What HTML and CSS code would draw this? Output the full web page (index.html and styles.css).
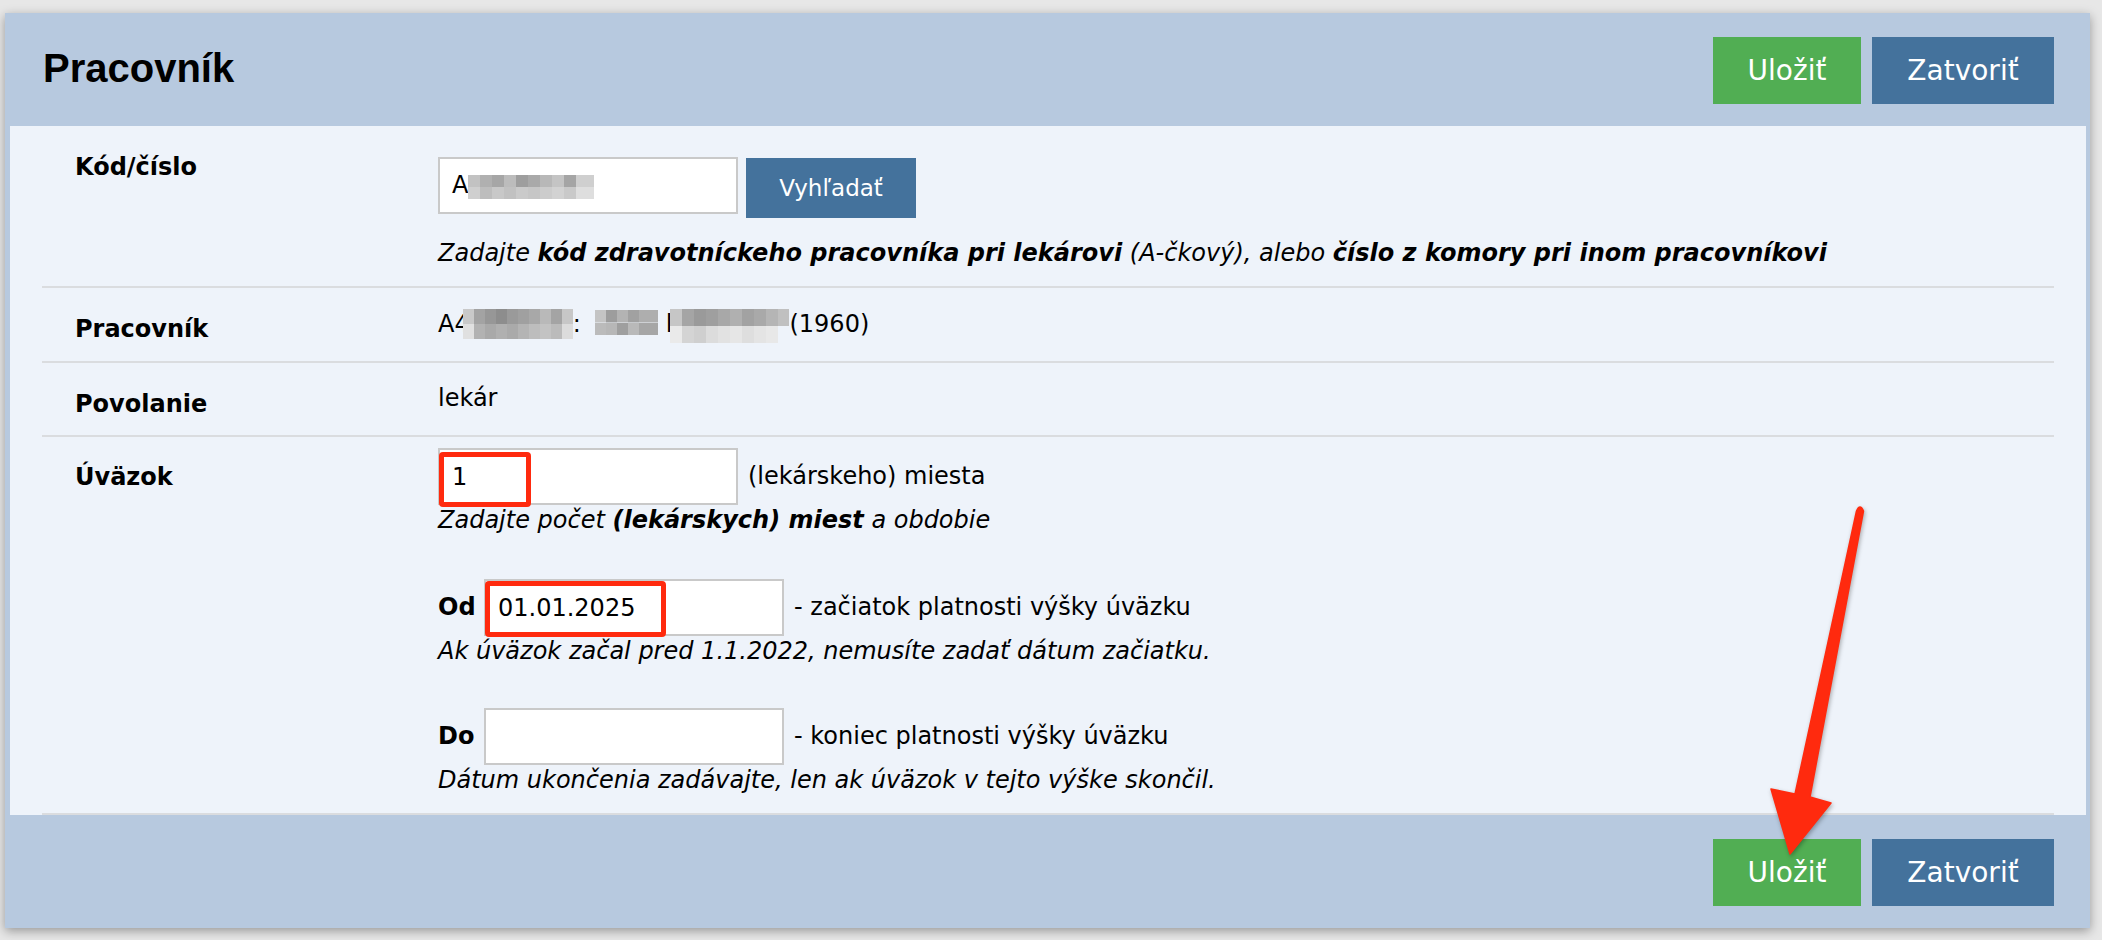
FILE: index.html
```html
<!DOCTYPE html>
<html lang="sk">
<head>
<meta charset="utf-8">
<title>Pracovník</title>
<link rel="stylesheet" href="styles.css">
</head>
<body>
<div class="dialog">
  <div class="bar">
    <h1 class="title">Pracovník</h1>
    <div class="actions">
      <button class="btn btn-save">Uložiť</button>
      <button class="btn btn-close">Zatvoriť</button>
    </div>
  </div>

  <div class="content">
    <div class="row row-code">
      <div class="label">Kód/číslo</div>
      <div class="value">
        <div class="search">
          <div class="field field-code"><span class="typed">A</span><span class="mosaic mosaic-code"></span></div>
          <button class="btn btn-search">Vyhľadať</button>
        </div>
        <p class="hint">Zadajte <b>kód zdravotníckeho pracovníka pri lekárovi</b> (A-čkový), alebo <b>číslo z komory pri inom pracovníkovi</b></p>
      </div>
    </div>

    <div class="row row-person">
      <div class="label">Pracovník</div>
      <div class="value">A4<span class="mosaic m1"></span>:<span class="mosaic m2"></span><span class="thin">l</span><span class="mosaic m3"></span>(1960)</div>
    </div>

    <div class="row row-job">
      <div class="label">Povolanie</div>
      <div class="value">lekár</div>
    </div>

    <div class="row row-load">
      <div class="label">Úväzok</div>
      <div class="value">
        <div class="line">
          <div class="wrap">
            <input class="field" type="text" value="1">
            <span class="mark mark-count"></span>
          </div>
          <span class="after">(lekárskeho) miesta</span>
        </div>
        <p class="hint tight">Zadajte počet <b>(lekárskych) miest</b> a obdobie</p>

        <div class="line line-from">
          <span class="sub">Od</span>
          <div class="wrap">
            <input class="field" type="text" value="01.01.2025">
            <span class="mark mark-date"></span>
          </div>
          <span class="after">- začiatok platnosti výšky úväzku</span>
        </div>
        <p class="hint tight">Ak úväzok začal pred 1.1.2022, nemusíte zadať dátum začiatku.</p>

        <div class="line line-to">
          <span class="sub">Do</span>
          <div class="wrap">
            <input class="field" type="text" value="">
          </div>
          <span class="after">- koniec platnosti výšky úväzku</span>
        </div>
        <p class="hint tight">Dátum ukončenia zadávajte, len ak úväzok v tejto výške skončil.</p>
      </div>
    </div>
  </div>

  <div class="bar bar-bottom">
    <div class="actions">
      <button class="btn btn-save">Uložiť</button>
      <button class="btn btn-close">Zatvoriť</button>
    </div>
  </div>
</div>

<svg class="arrow" width="2102" height="940" viewBox="0 0 2102 940" aria-hidden="true">
  <path d="M1856.5 511 Q1860 503 1863.5 511 L1810 797 L1831 803 L1790 854 L1771 789 L1795 794 Z" fill="#ff2a0e" stroke="#ff2a0e" stroke-width="1.5" stroke-linejoin="round"/>
</svg>
</body>
</html>
```

FILE: styles.css
```css
* { box-sizing: border-box; }

html, body { margin: 0; padding: 0; }

body {
  width: 2102px;
  height: 940px;
  overflow: hidden;
  position: relative;
  background: #e7e7e7;
  font-family: "DejaVu Sans", Verdana, sans-serif;
  font-size: 24px;
  color: #000;
}

.dialog {
  margin: 13px 0 0 5px;
  width: 2085px;
  background: #b7c9df;
  box-shadow: 0 3px 10px rgba(0, 0, 0, 0.35);
}

.bar {
  height: 113px;
  display: flex;
  align-items: center;
  justify-content: space-between;
  padding: 0 36px 0 38px;
}

.bar-bottom { justify-content: flex-end; }

.title {
  margin: 0 0 4px;
  font: bold 40px/46px "Liberation Sans", Arial, sans-serif;
  color: #000;
}

.actions { display: flex; gap: 11px; margin-top: 2px; }

.btn {
  border: 0;
  padding: 0;
  color: #fff;
  font-family: "DejaVu Sans", Verdana, sans-serif;
  font-size: 28px;
  height: 67px;
  cursor: pointer;
}

.btn-save { width: 148px; background: #51ae53; }
.btn-close { width: 182px; background: #44729c; }

.content {
  margin: 0 4px 0 5px;
  background: #eef3fa;
  padding: 0 32px;
}

.row {
  display: grid;
  grid-template-columns: 396px 1fr;
  align-items: start;
  border-bottom: 2px solid #dadcdf;
}

.label {
  font-weight: bold;
  line-height: 29px;
  padding: 27px 0 0 33px;
}

.value { line-height: 29px; padding-top: 21px; }

.row-code { padding-bottom: 18px; }
.row-code .value { padding-top: 31px; }

.row-person { padding-bottom: 17px; }
.row-job { padding-bottom: 16px; }

.row-load { padding-bottom: 18px; }
.row-load .label { padding-top: 26px; }
.row-load .value { padding-top: 11px; }

.search { display: flex; align-items: flex-start; gap: 8px; }

.field {
  width: 300px;
  height: 57px;
  border: 2px solid #c9c9c9;
  background: #fff;
  padding: 0 12px;
  margin: 0;
  font-family: "DejaVu Sans", Verdana, sans-serif;
  font-size: 24px;
  color: #000;
  outline: none;
  border-radius: 0;
}

.field-code { display: flex; align-items: center; }

.btn-search {
  width: 170px;
  height: 60px;
  font-size: 23px;
  background: #44729c;
  margin-top: 1px;
}

.hint {
  margin: 21px 0 0;
  font-style: italic;
  line-height: 29px;
}

.hint.tight { margin-top: 1px; }

.line { display: flex; align-items: center; }
.line-from { margin-top: 44px; }
.line-to { margin-top: 42px; }

.sub { font-weight: bold; width: 46px; flex: none; }

.wrap { position: relative; flex: none; }
.wrap .field { display: block; }

.after { margin-left: 10px; }

.mark {
  position: absolute;
  border: 5px solid #ff2a0e;
  border-radius: 4px;
  pointer-events: none;
}

.mark-count { left: 1px; top: 4px; width: 92px; height: 55px; }
.mark-date { left: 1px; top: 2px; width: 181px; height: 56px; }

.mosaic {
  display: inline-block;
  background-repeat: no-repeat;
  background-size: 100% 50%, 100% 50%;
  background-position: 0 0, 0 100%;
}

.mosaic-code {
  width: 126px;
  height: 24px;
  margin-top: 3px;
  background-image:
    linear-gradient(90deg, #c2c2c2 0 12px, #b0b0b0 12px 24px, #a6a6a6 24px 36px, #bcbcbc 36px 48px, #9e9e9e 48px 60px, #a9a9a9 60px 72px, #b8b8b8 72px 84px, #c4c4c4 84px 96px, #a5a5a5 96px 108px, #cfcfcf 108px 126px),
    linear-gradient(90deg, #cfcfcf 0 12px, #bdbdbd 12px 24px, #c8c8c8 24px 36px, #c1c1c1 36px 48px, #cacaca 48px 60px, #c6c6c6 60px 72px, #cccccc 72px 84px, #d2d2d2 84px 96px, #c9c9c9 96px 108px, #dedede 108px 126px);
}

.m1 {
  width: 110px;
  height: 30px;
  margin-left: -7px;
  vertical-align: -7px;
  background-image:
    linear-gradient(90deg, #c9c9c9 0 11px, #a3a3a3 11px 22px, #979797 22px 33px, #8d8d8d 33px 44px, #9a9a9a 44px 55px, #a0a0a0 55px 66px, #a8a8a8 66px 77px, #b9b9b9 77px 88px, #a4a4a4 88px 99px, #c7c7c7 99px 110px),
    linear-gradient(90deg, #e0e0e0 0 11px, #b2b2b2 11px 22px, #a9a9a9 22px 33px, #b0b0b0 33px 44px, #aaaaaa 44px 55px, #b4b4b4 55px 66px, #bdbdbd 66px 77px, #c3c3c3 77px 88px, #bbbbbb 88px 99px, #dcdcdc 99px 110px);
}

.m2 {
  width: 63px;
  height: 25px;
  margin-left: 14px;
  vertical-align: -3px;
  background-image:
    linear-gradient(90deg, #c4c4c4 0 11px, #9d9d9d 11px 22px, #b3b3b3 22px 33px, #a1a1a1 33px 44px, #aeaeae 44px 63px),
    linear-gradient(90deg, #bbbbbb 0 11px, #b7b7b7 11px 22px, #9f9f9f 22px 33px, #b9b9b9 33px 44px, #a6a6a6 44px 63px);
}

.thin { margin-left: 8px; }

.m3 {
  width: 119px;
  height: 34px;
  margin-left: -2px;
  vertical-align: -11px;
  background-image:
    linear-gradient(90deg, #c6c6c6 0 12px, #a5a5a5 12px 24px, #9a9a9a 24px 36px, #9f9f9f 36px 48px, #a8a8a8 48px 60px, #b0b0b0 60px 72px, #a2a2a2 72px 84px, #a9a9a9 84px 96px, #b5b5b5 96px 108px, #c0c0c0 108px 119px),
    linear-gradient(90deg, #eaeaea 0 12px, #d4d4d4 12px 24px, #cfcfcf 24px 36px, #dcdcdc 36px 48px, #e2e2e2 48px 60px, #e6e6e6 60px 72px, #dedede 72px 84px, #e4e4e4 84px 96px, #e8e8e8 96px 108px, #eef3fa 108px 119px);
}

.arrow {
  position: absolute;
  left: 0;
  top: 0;
  pointer-events: none;
  filter: drop-shadow(1px 2px 2px rgba(0, 0, 0, 0.3));
}
```
